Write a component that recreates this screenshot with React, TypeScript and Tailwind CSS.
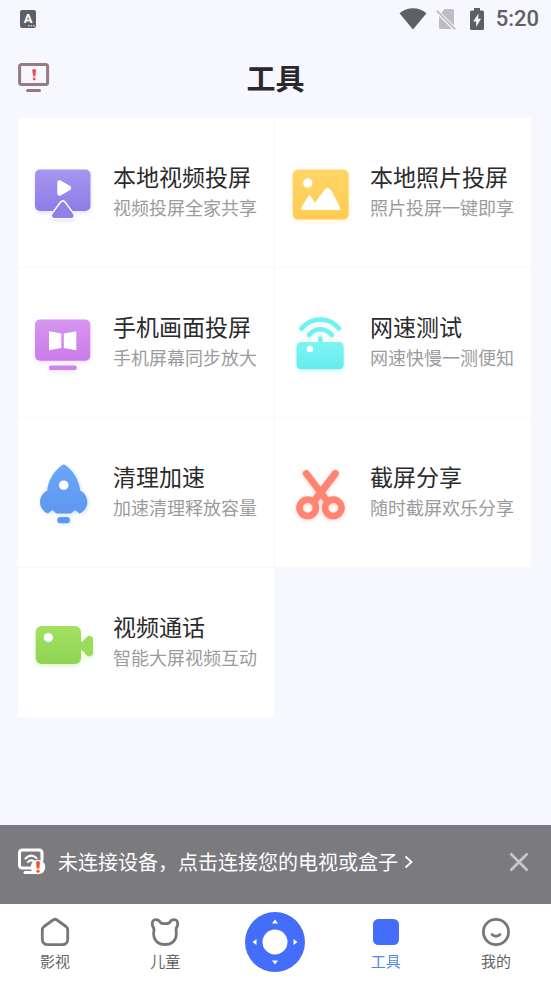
import type { ReactNode } from "react";

type Tool = {
  title: string;
  desc: string;
  icon: ReactNode;
};

const tools: Tool[] = [
  {
    title: "本地视频投屏",
    desc: "视频投屏全家共享",
    icon: (
      <ToolIcon shadow="drop-shadow-[0_2px_2px_#9282ea40]">
        <Gradient id="violet" from="#a795ee" to="#8e7ce8" />
        <rect x="5" y="10.5" width="55.5" height="41.5" rx="5" fill="url(#violet)" />
        <path
          d="M32.8 45 24.500 56.500H41.100Z"
          fill="#fff"
          stroke="#fff"
          strokeWidth="7.500"
          strokeLinejoin="round"
        />
        <path
          d="M32.800 45.500 24.500 56.500H41.100Z"
          fill="#9280e9"
          stroke="#9280e9"
          strokeWidth="5"
          strokeLinejoin="round"
        />
        <path
          d="M29.5 23.5V34.5L39 29Z"
          fill="#fff"
          stroke="#fff"
          strokeWidth="4.5"
          strokeLinejoin="round"
        />
      </ToolIcon>
    ),
  },
  {
    title: "本地照片投屏",
    desc: "照片投屏一键即享",
    icon: (
      <ToolIcon shadow="drop-shadow-[0_2px_2px_#ffcf5040]">
        <Gradient id="amber" from="#ffd568" to="#ffcb52" />
        <rect x="5.7" y="10.5" width="56" height="50" rx="5.5" fill="url(#amber)" />
        <circle cx="20.7" cy="24" r="4.7" fill="#fff" />
        <path
          d="M15.5 49.5 22.5 38 27.8 46.6 38.5 32Q40.7 28.8 42.8 32L52 49.5Z"
          fill="#fff"
          stroke="#fff"
          strokeWidth="3"
          strokeLinejoin="round"
        />
      </ToolIcon>
    ),
  },
  {
    title: "手机画面投屏",
    desc: "手机屏幕同步放大",
    icon: (
      <ToolIcon shadow="drop-shadow-[0_2px_2px_#cc7bea40]">
        <Gradient id="orchid" from="#d695ee" to="#cb7cea" />
        <rect x="5" y="10.5" width="55.3" height="41.3" rx="5" fill="url(#orchid)" />
        <rect x="19" y="56.5" width="27.7" height="4.5" rx="1.8" fill="#ce82ea" />
        <path d="M19 22.3 31.3 24.5V39L19 41.2ZM46.3 22.3 33.8 24.5V39L46.3 41.2Z" fill="#fff" />
      </ToolIcon>
    ),
  },
  {
    title: "网速测试",
    desc: "网速快慢一测便知",
    icon: (
      <ToolIcon shadow="drop-shadow-[0_2px_2px_#6cefef40]">
        <Gradient id="aqua" from="#7cf5f4" to="#66ecee" />
        <g fill="none" stroke="#72f1f0" strokeWidth="4.6" strokeLinecap="round">
          <path d="M14.5 19.5Q22 10.5 33.3 10.5T52 19.5" />
          <path d="M22 26Q26.5 20.3 33.3 20.3T44.8 26" />
          <path d="M33.3 29.5V35" />
        </g>
        <rect x="9.5" y="33" width="47.2" height="27.2" rx="4.5" fill="url(#aqua)" />
        <circle cx="23" cy="40" r="3.2" fill="#fff" />
      </ToolIcon>
    ),
  },
  {
    title: "清理加速",
    desc: "加速清理释放容量",
    icon: (
      <ToolIcon shadow="drop-shadow-[1px_1px_2px_#63a2f850]">
        <Gradient id="azure" from="#6aa7f5" to="#5f97f2" />
        <path
          d="M33.7 5.5C35.5 5.5 48.5 15 50.3 31.5C55 34 57.500 38.500 57.300 44C57 48.500 54 52.500 49.500 54.500L45 51 41 54.500H26.500L22.200 51 17.800 54.500C13.500 52.500 10.300 48.500 10 44C9.800 38.500 12.500 34 17.200 31.500C19 15 32 5.500 33.700 5.500Z"
          fill="url(#azure)"
        />
        <circle cx="33.7" cy="26.2" r="4.8" fill="#fff" />
        <rect x="27.3" y="58" width="12.7" height="6.2" rx="3" fill="#5c97f2" />
      </ToolIcon>
    ),
  },
  {
    title: "截屏分享",
    desc: "随时截屏欢乐分享",
    icon: (
      <ToolIcon shadow="drop-shadow-[0_1px_2px_#ff806e60]">
        <g fill="none" stroke="#ff8573" strokeLinecap="round">
          <path d="M19.3 14.5 41 43M48.3 14.5 26.5 43" strokeWidth="7" />
          <circle cx="20.7" cy="48.8" r="8.2" strokeWidth="6.6" />
          <circle cx="46.3" cy="48.8" r="8.2" strokeWidth="6.6" />
        </g>
      </ToolIcon>
    ),
  },
  {
    title: "视频通话",
    desc: "智能大屏视频互动",
    icon: (
      <ToolIcon shadow="drop-shadow-[0_2px_2px_#96dc5850]">
        <Gradient id="lime" from="#a3e162" to="#90d455" />
        <rect x="5.7" y="17" width="45.3" height="38" rx="6" fill="url(#lime)" />
        <path
          d="M49 33.500 52.500 32.500 57.500 27.500Q58.500 26.300 60 27L62 28Q63 28.600 63 30V44Q63 45.500 62 46.200L60 47.200Q58.500 47.800 57.300 46.700L52.500 41.500 49 40.500Z"
          fill="#9ada5c"
        />
        <circle cx="18.3" cy="28.6" r="4.6" fill="#fff" />
      </ToolIcon>
    ),
  },
];

function Gradient({ id, from, to }: { id: string; from: string; to: string }) {
  return (
    <defs>
      <linearGradient id={id} x1="0" y1="0" x2="0" y2="1">
        <stop offset="0" stopColor={from} />
        <stop offset="1" stopColor={to} />
      </linearGradient>
    </defs>
  );
}

function ToolIcon({ shadow, children }: { shadow: string; children: ReactNode }) {
  return (
    <svg viewBox="0 0 68 68" className={`size-[68px] shrink-0 ${shadow}`} aria-hidden="true">
      {children}
    </svg>
  );
}

function StatusBar() {
  return (
    <div className="flex h-[38px] items-center justify-between pr-3 pl-5 text-[#5f6064]">
      <span className="relative flex h-[18px] w-4 items-center justify-center rounded-[2px] bg-[#5f6064] font-['Roboto',sans-serif] text-[13px] font-bold text-white">
        A
        <svg viewBox="0 0 7 2" className="absolute right-px bottom-px h-0.5 w-[7px]" aria-hidden="true">
          <path d="M0 0H1.500V1.500H0ZM2.700 0H4.200V1.500H2.700ZM5.400 0H6.900V1.500H5.400Z" fill="#c9c9cf" />
        </svg>
      </span>
      <div className="flex items-center">
        <svg viewBox="0 0 28 22" className="h-[22px] w-7" aria-hidden="true">
          <path d="M14 21.5.5 5.2Q6.5 .3 14 .3T27.5 5.2Z" fill="currentColor" />
        </svg>
        <svg viewBox="0 0 20 22" className="ml-[9px] h-[22px] w-5" aria-hidden="true">
          <path d="M8.5 1H16.5Q18 1 18 2.5V17.500L5.500 5ZM3 8 16 21H4.5Q3 21 3 19.5Z" fill="#bdbdc2" />
          <path d="M.700 2.700 19.300 21.300" stroke="#bdbdc2" strokeWidth="1.8" />
        </svg>
        <svg viewBox="0 0 14 22" className="ml-[14px] h-[22px] w-[14px]" aria-hidden="true">
          <path d="M4 0H10V2.5H12.5Q14 2.5 14 4V20.5Q14 22 12.5 22H1.5Q0 22 0 20.5V4Q0 2.5 1.5 2.5H4Z" fill="currentColor" />
          <path d="M8.5 5.5 3.2 13.5H6.2V19L11 10.8H8.2Z" fill="#f7f7ff" />
        </svg>
        <span className="ml-3 font-['Roboto',sans-serif] text-[22px] leading-6 font-medium">5:20</span>
      </div>
    </div>
  );
}

function Header() {
  return (
    <header className="grid h-20 grid-cols-[1fr_auto_1fr] items-center px-[18px]">
      <button type="button" aria-label="连接设备" className="w-8">
        <svg viewBox="0 0 32 32" className="size-8" fill="none" aria-hidden="true">
          <rect x="1.6" y="2.5" width="28" height="20" rx="2" stroke="#977b82" strokeWidth="3" />
          <path d="M9.5 28.5H21.5" stroke="#977b82" strokeWidth="3" strokeLinecap="round" />
          <path d="M14.2 8.5Q14.2 7 16.2 7T18.2 8.5L17.2 14.5H15.2Z" fill="#f0505a" />
          <circle cx="16.2" cy="17" r="1.4" fill="#f0505a" />
        </svg>
      </button>
      <h1 className="pb-[3px] text-[29px] leading-10 font-bold text-[#29292d]">工具</h1>
    </header>
  );
}

function ConnectBanner() {
  return (
    <div className="flex h-[79px] items-center bg-[#7b7a7e] pr-[22px] pb-[5px] pl-[18px] text-white">
      <svg viewBox="0 0 28 28" className="size-7 shrink-0" fill="none" aria-hidden="true">
        <path
          d="M16 20H4.5Q1.5 20 1.5 17V5Q1.5 2 4.5 2H21Q24 2 24 5V12M7 24.5H20"
          stroke="#fff"
          strokeWidth="3"
          strokeLinecap="round"
        />
        <g stroke="#fff" strokeWidth="2.2" strokeLinecap="round">
          <path d="M7.5 10.5Q13 5.2 18.5 10" />
          <path d="M10 14Q13 11 16 13.5" />
        </g>
        <circle cx="20" cy="19" r="7.3" fill="#fff" />
        <path d="M18 14.5Q18 13 20 13T22 14.5L21.3 20.5H18.7Z" fill="#f4512c" />
        <circle cx="20" cy="23.2" r="1.6" fill="#f4512c" />
      </svg>
      <button type="button" className="ml-3 flex items-center text-xl leading-7 whitespace-nowrap">
        未连接设备，点击连接您的电视或盒子
        <svg viewBox="0 0 10 16" className="ml-1.5 h-4 w-2.5" fill="none" aria-hidden="true">
          <path d="M1.5 2.5 7.5 8 1.5 13.5" stroke="#fff" strokeWidth="1.8" />
        </svg>
      </button>
      <button type="button" aria-label="关闭" className="ml-auto">
        <svg viewBox="0 0 20 20" className="size-5" fill="none" aria-hidden="true">
          <path d="M1.5 1.5 18.5 18.5M18.5 1.5 1.5 18.5" stroke="#c9c9cb" strokeWidth="2.6" />
        </svg>
      </button>
    </div>
  );
}

function NavItem({ label, active, children }: { label: string; active?: boolean; children: ReactNode }) {
  return (
    <a
      href="#"
      aria-current={active ? "page" : undefined}
      className={`flex flex-col items-center pt-1 ${active ? "text-[#4a8be8]" : "text-[#646466]"}`}
    >
      <svg
        viewBox="0 0 30 30"
        className="size-[30px]"
        fill="none"
        stroke="#77777a"
        strokeWidth="2.8"
        strokeLinecap="round"
        strokeLinejoin="round"
        aria-hidden="true"
      >
        {children}
      </svg>
      <span className="mt-1 text-[15px] leading-5">{label}</span>
    </a>
  );
}

function BottomNav() {
  return (
    <nav className="grid h-[77px] grid-cols-5 items-center bg-white pb-0.5">
      <NavItem label="影视">
        <path d="M13 3 4 9.5Q2.3 10.8 2.3 13V22Q2.3 27.700 8 27.700H22Q27.700 27.700 27.700 22V13Q27.7 10.8 26 9.5L17 3Q15 1.5 13 3Z" />
      </NavItem>
      <NavItem label="儿童">
        <path d="M11 6.2C9.5 3.3 7.5 2.5 5.5 2.6C3 2.8 2 5 2.3 7.5C2.5 9.5 3.8 10.5 4 12.5C3.500 15 3.500 18 4.200 20.500C5.800 25.500 10 27.500 15 27.500S24.200 25.500 25.800 20.500C26.500 18 26.500 15 26 12.500C26.2 10.5 27.5 9.5 27.7 7.5C28 5 27 2.8 24.5 2.6C22.5 2.5 20.5 3.3 19 6.2Q15 7.2 11 6.2Z" />
      </NavItem>
      <button type="button" aria-label="遥控器" className="justify-self-center">
        <svg viewBox="0 0 60 60" className="size-[60px]" aria-hidden="true">
          <circle cx="30" cy="30" r="30" fill="#436dfb" />
          <circle cx="30" cy="30" r="12.5" fill="#fff" />
          <path
            d="M30 7.500 33 11.500H27ZM30 52.500 33 48.500H27ZM7.500 30 11.500 27V33ZM52.500 30 48.500 27V33Z"
            fill="#fff"
          />
        </svg>
      </button>
      <NavItem label="工具" active>
        <rect x="2" y="2" width="26" height="26" rx="5.5" fill="#436dfb" stroke="none" />
      </NavItem>
      <NavItem label="我的">
        <circle cx="15" cy="15" r="12.6" />
        <path d="M11 17.5Q15 21 19 17.5" />
      </NavItem>
    </nav>
  );
}

export default function App() {
  return (
    <div className="flex min-h-screen flex-col bg-[#f7f7ff] font-['Noto_Sans_CJK_SC',sans-serif]">
      <StatusBar />
      <Header />
      <main className="pr-5 pb-6 pl-[18px]">
        <div className="grid grid-cols-2 gap-px">
          {tools.map((tool) => (
            <button
              key={tool.title}
              type="button"
              className="flex h-[149px] items-center gap-[15px] bg-white pl-3 text-left"
            >
              {tool.icon}
              <span className="flex flex-col pb-1 whitespace-nowrap">
                <span className="text-[23px] leading-8 text-[#2b2b2d]">{tool.title}</span>
                <span className="text-[18px] leading-[30px] text-[#9b9b9d]">{tool.desc}</span>
              </span>
            </button>
          ))}
        </div>
      </main>
      <div className="sticky bottom-0 mt-auto">
        <ConnectBanner />
        <BottomNav />
      </div>
    </div>
  );
}
